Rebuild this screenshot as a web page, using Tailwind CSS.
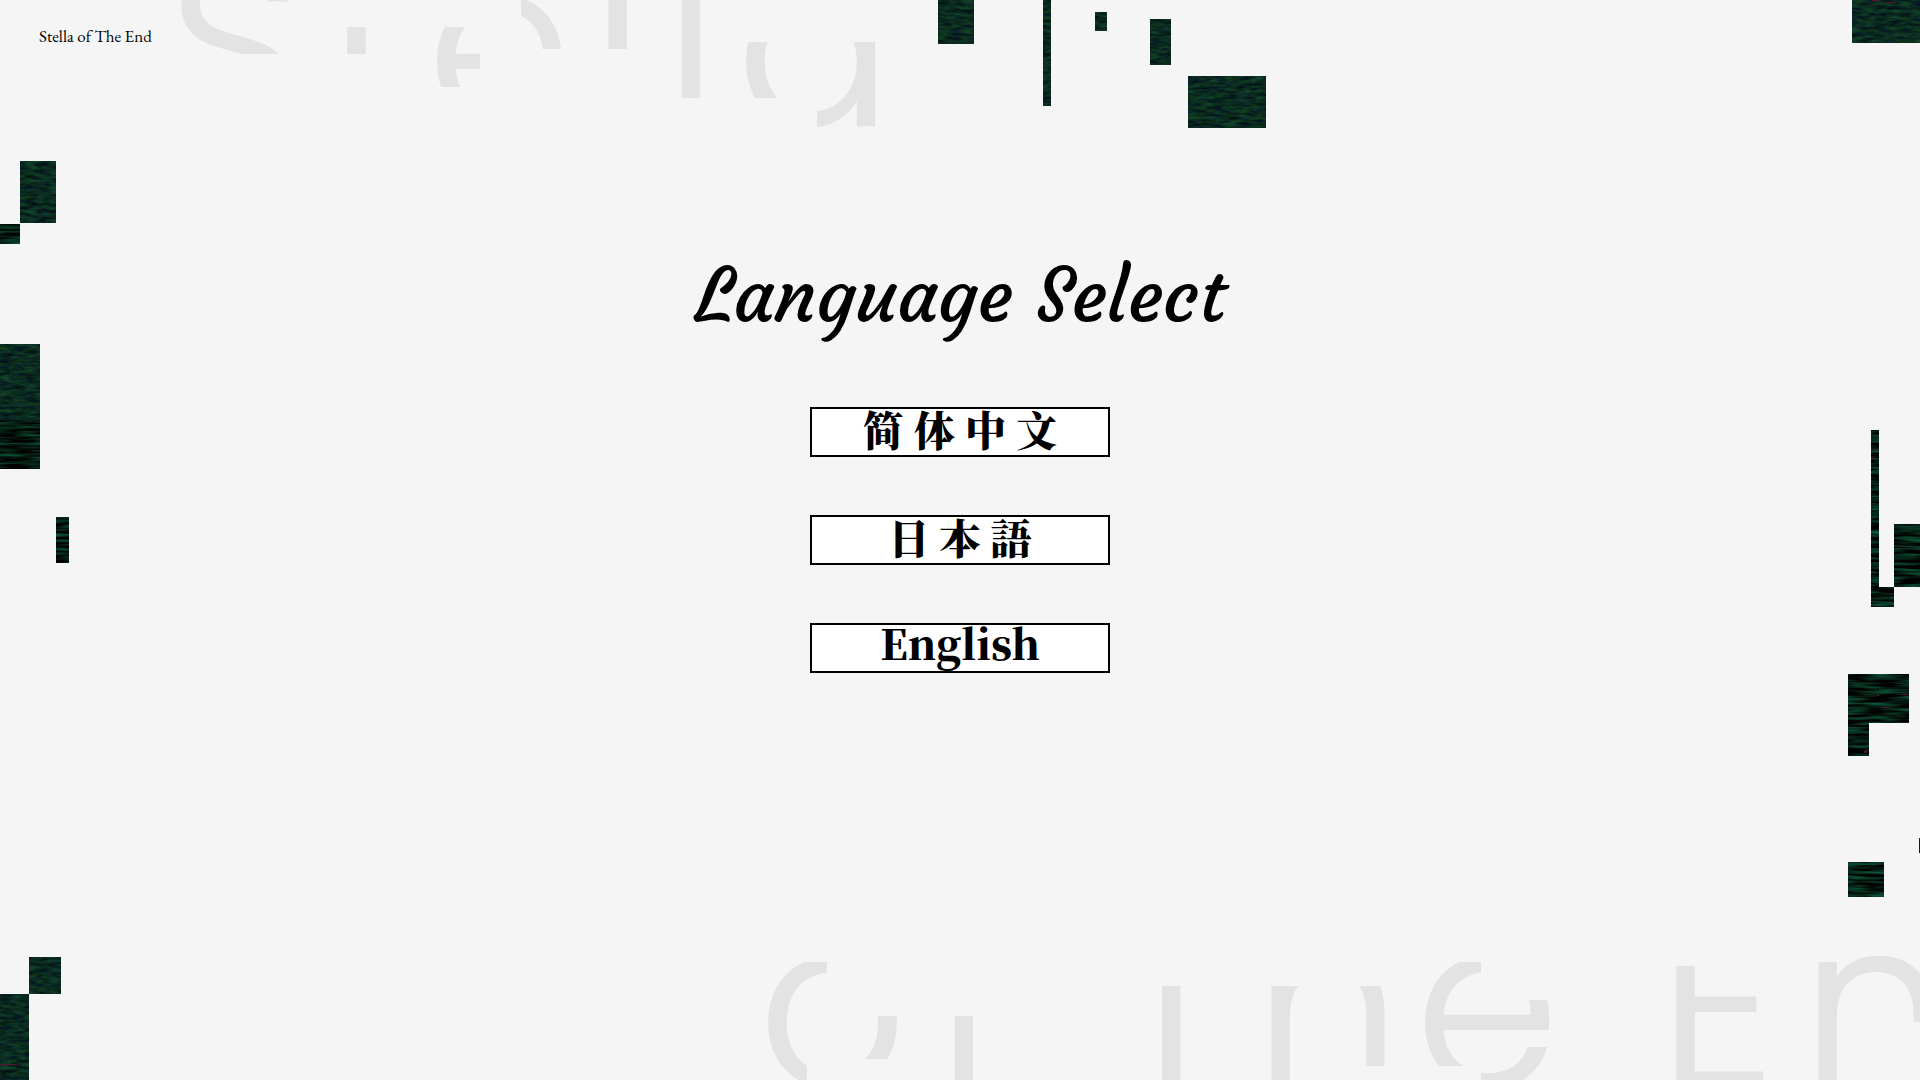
<!DOCTYPE html>
<html lang="en">
<head>
  <meta charset="UTF-8" />
  <meta name="viewport" content="width=device-width, initial-scale=1.0" />
  <title>Stella of The End - Language Select</title>
  <script src="https://cdn.jsdelivr.net/npm/@tailwindcss/browser@4"></script>
</head>
<body class="relative flex min-h-screen flex-col overflow-hidden bg-[#f5f5f5] text-black antialiased">

  <!-- Background: sliced title and noise blocks -->
  <svg class="absolute inset-0 -z-10 h-full w-full" viewBox="0 0 1920 1080" preserveAspectRatio="xMidYMid slice" aria-hidden="true">
    <defs>
      <filter id="noise" x="0" y="0" width="1920" height="1080" filterUnits="userSpaceOnUse" color-interpolation-filters="sRGB">
        <feTurbulence type="fractalNoise" baseFrequency="0.08 0.3" numOctaves="3" seed="7" />
        <feColorMatrix type="matrix" values="0.1 0 0 0 -0.01  0.35 0 0 0 -0.01  0.1 0.15 0 0 0  0 0 0 0 1" />
        <feComposite in2="SourceGraphic" operator="in" />
      </filter>
      <filter id="noiseDark" x="0" y="0" width="1920" height="1080" filterUnits="userSpaceOnUse" color-interpolation-filters="sRGB">
        <feTurbulence type="fractalNoise" baseFrequency="0.03 0.35" numOctaves="2" seed="3" />
        <feColorMatrix type="matrix" values="0.1 0 0 0 -0.03  0.7 0 0 0 -0.24  0.5 0 0 0 -0.18  0 0 0 0 1" />
        <feComposite in2="SourceGraphic" operator="in" />
      </filter>
      <clipPath id="topSlices">
        <path d="M170 0h130v54H170zM340 27h40v27H340zM430 27h50v60H430zM521 0h50v49H521zM600 0h40v49H600zM670 0h40v98H670zM740 42h45v56H740zM817 42h70v90H817z" />
      </clipPath>
      <clipPath id="bottomSlices">
        <path d="M760 962h67v40H807v78H760zM850 1016h54v43H850zM950 1016h24v64H950zM1155 986h34v94H1155zM1265 986h70v94H1265zM1350 986h40v80H1350zM1420 962h61v38h80v34H1481v32H1420zM1481 1047h80v33H1481zM1670 966h90v50h20v64H1670zM1810 962h28v-10h82v70H1860v58H1810z" />
      </clipPath>
    </defs>

    <g class="fill-[#e3e3e3] stroke-[#e3e3e3] stroke-2 font-['Poppins','Noto_Sans',sans-serif] font-light text-[232px]">
      <text clip-path="url(#topSlices)" y="125" x="168 325 427 591 664 736">Stella</text>
      <text clip-path="url(#bottomSlices)" y="1086" x="758 933 0 1111 1254 1415 0 1659 1801">of The En</text>
    </g>

    <g filter="url(#noise)">
      <path d="M938 0h36v44h-36zM1043 0h8v106h-8zM1095 12h12v19h-12zM1150 19h21v46h-21zM1188 76h78v52h-78zM1852 0h68v43h-68z" />
      <path d="M20 161h36v62H20zM0 344h40v76H0zM29 957h32v37H29zM0 994h29v86H0z" />
    </g>
    <g filter="url(#noiseDark)">
      <path d="M0 224h20v20H0zM0 420h40v49H0zM56 517h13v46H56z" />
      <path d="M1871 430h8v157h15v20h-23zM1894 524h26v63h-26zM1848 674h61v49h-40v33h-21zM1848 862h36v35h-36zM1919 838h1v15h-1z" />
    </g>
    <path class="fill-[#5e1232]" d="M1873 450h4v1h-4zM1871 458h4v1h-4zM1890 596h2v1h-2zM1877 695h2v1h-2zM1902 694h6v1h-6zM1881 707h8v1h-8zM1864 751h3v2h-3zM0 1064h17v1H0zM1872 0h8v1h-8zM1886 2h10v1h-10z" />
  </svg>

  <header class="px-[39px] py-6">
    <p class="font-['EB_Garamond','Liberation_Serif',serif] text-[17px] leading-6">Stella of The End</p>
  </header>

  <main class="flex flex-col items-center pt-[174px]">
    <h1 class="font-['Lucida_Calligraphy','Courgette','Liberation_Serif',cursive] text-[75px] leading-[100px] font-normal">Language Select</h1>

    <div class="mt-[61px] flex flex-col gap-[58px]">
      <button type="button" lang="zh-Hans" class="flex h-[50px] w-[300px] items-center justify-center border-2 border-black bg-white pb-2 font-['Noto_Serif_CJK_SC','Noto_Sans_CJK_SC',serif] text-[41px] leading-none font-black">简 体 中 文</button>
      <button type="button" lang="ja" class="flex h-[50px] w-[300px] items-center justify-center border-2 border-black bg-white pb-2 font-['Noto_Serif_CJK_JP','Noto_Sans_CJK_JP',serif] text-[41px] leading-none font-black">日 本 語</button>
      <button type="button" class="flex h-[50px] w-[300px] items-center justify-center border-2 border-black bg-white pb-3 font-['Noto_Serif_CJK_SC','Liberation_Serif',serif] text-[41px] leading-none font-black">English</button>
    </div>
  </main>

</body>
</html>
